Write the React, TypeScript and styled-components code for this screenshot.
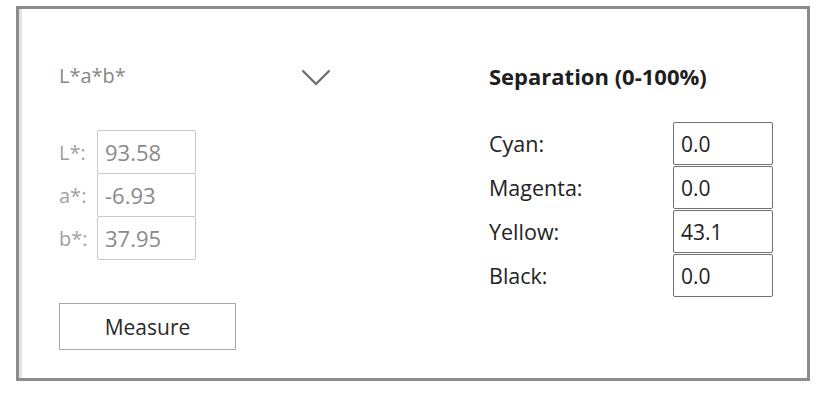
import React from "react";
import styled, { createGlobalStyle } from "styled-components";

const GlobalStyle = createGlobalStyle`
  html, body {
    margin: 0;
    padding: 0;
    background: #ffffff;
  }
  body {
    font-family: "Open Sans", "Noto Sans", "Liberation Sans", sans-serif;
  }
`;

const labFields = [
  { label: "L*:", value: "93.58" },
  { label: "a*:", value: "-6.93" },
  { label: "b*:", value: "37.95" },
];

const separations = [
  { label: "Cyan:", value: "0.0" },
  { label: "Magenta:", value: "0.0" },
  { label: "Yellow:", value: "43.1" },
  { label: "Black:", value: "0.0" },
];

const App = () => {
  return (
    <>
      <GlobalStyle />
      <Page>
        <Frame>
          <LeftColumn>
            <SpaceSelect>
              <SelectText>L*a*b*</SelectText>
              <Chevron width="30" height="17" viewBox="0 0 30 17">
                <polyline points="1.5,1.5 15,15 28.5,1.5" />
              </Chevron>
            </SpaceSelect>
            <LabList>
              {labFields.map((f) => (
                <LabRow key={f.label}>
                  <LabLabel>{f.label}</LabLabel>
                  <LabBox>{f.value}</LabBox>
                </LabRow>
              ))}
            </LabList>
            <MeasureButton>Measure</MeasureButton>
          </LeftColumn>

          <RightColumn>
            <SectionTitle>Separation (0-100%)</SectionTitle>
            <SepList>
              {separations.map((s) => (
                <SepRow key={s.label}>
                  <SepLabel>{s.label}</SepLabel>
                  <SepBox>{s.value}</SepBox>
                </SepRow>
              ))}
            </SepList>
          </RightColumn>
        </Frame>
      </Page>
    </>
  );
};

const Page = styled.div`
  padding: 6px 0 0 16px;
`;

const Frame = styled.div`
  box-sizing: content-box;
  width: 748px;
  height: 314px;
  padding: 55px 0 0 40px;
  border: 3px solid #8c8c8c;
  box-shadow: inset 3px 0 0 #e4e4e4;
  background: #ffffff;
  display: flex;
`;

const LeftColumn = styled.div`
  width: 430px;
  display: flex;
  flex-direction: column;
`;

const SpaceSelect = styled.div`
  width: 272px;
  height: 24px;
  display: flex;
  align-items: center;
  justify-content: space-between;
`;

const SelectText = styled.span`
  font-size: 20px;
  color: #888888;
  line-height: 24px;
`;

const Chevron = styled.svg`
  fill: none;
  stroke: #6a6a6a;
  stroke-width: 2.2;
  margin-top: 2px;
`;

const LabList = styled.div`
  margin-top: 42px;
  display: flex;
  flex-direction: column;
`;

const LabRow = styled.div`
  display: flex;
  align-items: center;
  & + & {
    margin-top: -1px;
  }
`;

const LabLabel = styled.span`
  width: 38px;
  font-size: 20px;
  color: #a0a0a0;
`;

const LabBox = styled.div`
  width: 99px;
  height: 44px;
  box-sizing: border-box;
  border: 1px solid #c9c9c9;
  border-radius: 2px;
  display: flex;
  align-items: center;
  padding-left: 7px;
  font-size: 22px;
  color: #8a8a8a;
`;

const MeasureButton = styled.button`
  margin-top: 43px;
  width: 177px;
  height: 47px;
  border: 1.5px solid #a8a8a8;
  background: #ffffff;
  font-family: "Open Sans", "Noto Sans", sans-serif;
  font-size: 21px;
  color: #2a2a2a;
  padding: 0;
`;

const RightColumn = styled.div`
  display: flex;
  flex-direction: column;
`;

const SectionTitle = styled.div`
  font-size: 22px;
  font-weight: 700;
  color: #1e1e1e;
  line-height: 24px;
`;

const SepList = styled.div`
  margin-top: 34px;
  display: flex;
  flex-direction: column;
  gap: 1px;
`;

const SepRow = styled.div`
  display: flex;
  align-items: center;
`;

const SepLabel = styled.span`
  width: 184px;
  font-size: 21.5px;
  color: #222222;
`;

const SepBox = styled.div`
  width: 100px;
  height: 43px;
  box-sizing: border-box;
  border: 1.5px solid #707070;
  border-radius: 2px;
  display: flex;
  align-items: center;
  padding-left: 7px;
  font-size: 21px;
  color: #1e1e1e;
`;

export default App;
